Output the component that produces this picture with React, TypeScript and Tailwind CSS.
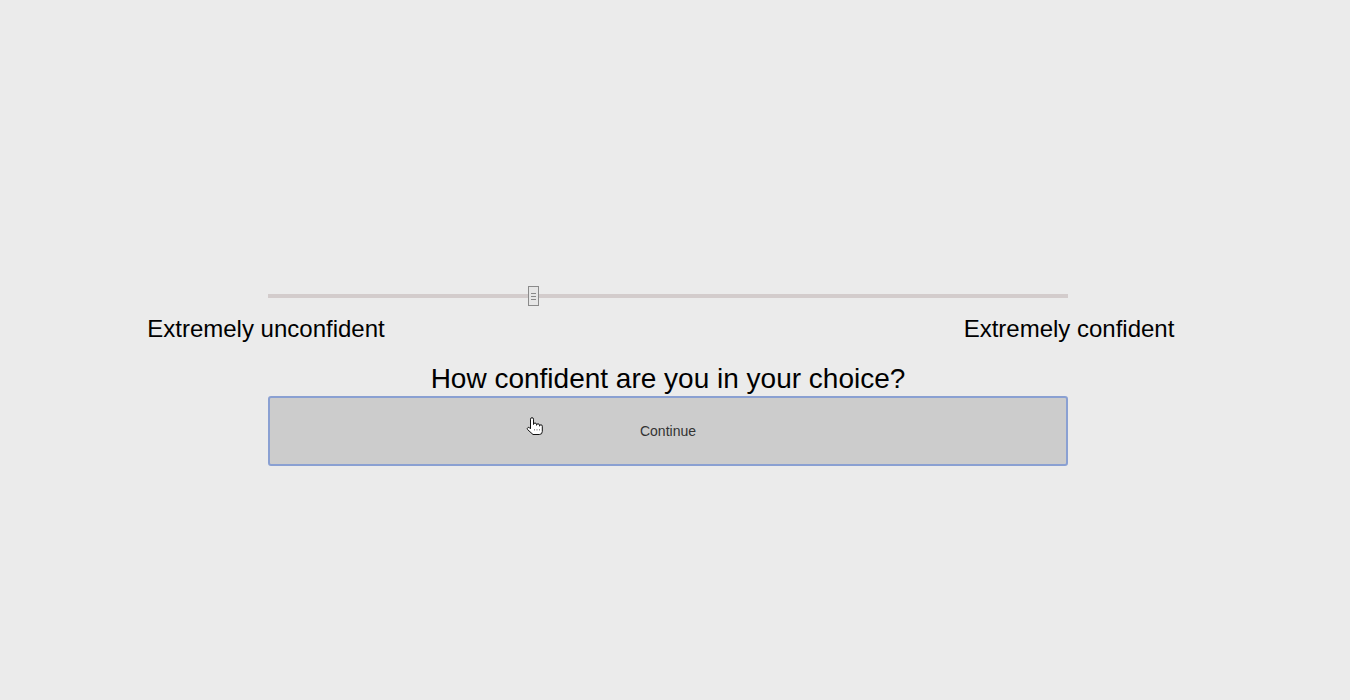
import React from 'react';

// Hand pointer drawn over the button (mouse cursor in the capture)
const HandCursor = () => (
  <svg width="18" height="19" viewBox="0 0 18 19" className="absolute left-[256px] top-[19px]">
    <path
      d="M4.5 11 V2.2 a1.5 1.5 0 0 1 3 0 V7.5 a1.5 1.5 0 0 1 3 0 V8.3 a1.5 1.5 0 0 1 3 0 V9.2 a1.4 1.4 0 0 1 2.8 0 V14.5 q0 3 -3 3 H7 L1.6 12.6 a1.3 1.3 0 0 1 2.1 -1.7 L4.5 11.8 Z"
      fill="#fff"
      stroke="#111"
      strokeWidth="1"
      strokeLinejoin="round"
    />
    <path d="M8.5 12 v2 M11 12 v2 M13.5 12 v2" stroke="#555" strokeWidth="0.8" strokeDasharray="0.8 0.8" />
  </svg>
);

export default function App() {
  return (
    <div className="min-h-[700px] bg-[#ebebeb] font-['Liberation_Sans',Arial,sans-serif] text-black">
      <div className="pt-[286px] pl-[268px]">
        <div className="w-[800px] flex flex-col">
          {/* slider */}
          <div className="relative h-[20px]">
            <div className="mt-[8px] h-[4px] bg-[#d3cccc]" />
            <div className="absolute left-[260px] top-0 w-[11px] h-[20px] bg-[#e6e6e6] border border-[#8a8a8a] flex flex-col items-center justify-center gap-[2px]">
              <div className="w-[5px] h-px bg-[#888]" />
              <div className="w-[5px] h-px bg-[#888]" />
              <div className="w-[5px] h-px bg-[#888]" />
            </div>
          </div>

          {/* end labels, centred on the slider ends */}
          <div className="mt-[9px] flex justify-between text-[24px] leading-[28px]">
            <div className="w-0 flex justify-center">
              <span className="whitespace-nowrap -translate-x-[2px]">Extremely unconfident</span>
            </div>
            <div className="w-0 flex justify-center">
              <span className="whitespace-nowrap translate-x-[1px]">Extremely confident</span>
            </div>
          </div>

          <p className="mt-[20px] text-center text-[28px] leading-[32px]">How confident are you in your choice?</p>

          <button className="relative mt-[1px] h-[70px] w-[800px] bg-[#cccccc] border-2 border-[#8aa0d2] rounded-[3px] text-[14px] text-[#333]">
            Continue
            <HandCursor />
          </button>
        </div>
      </div>
    </div>
  );
}
